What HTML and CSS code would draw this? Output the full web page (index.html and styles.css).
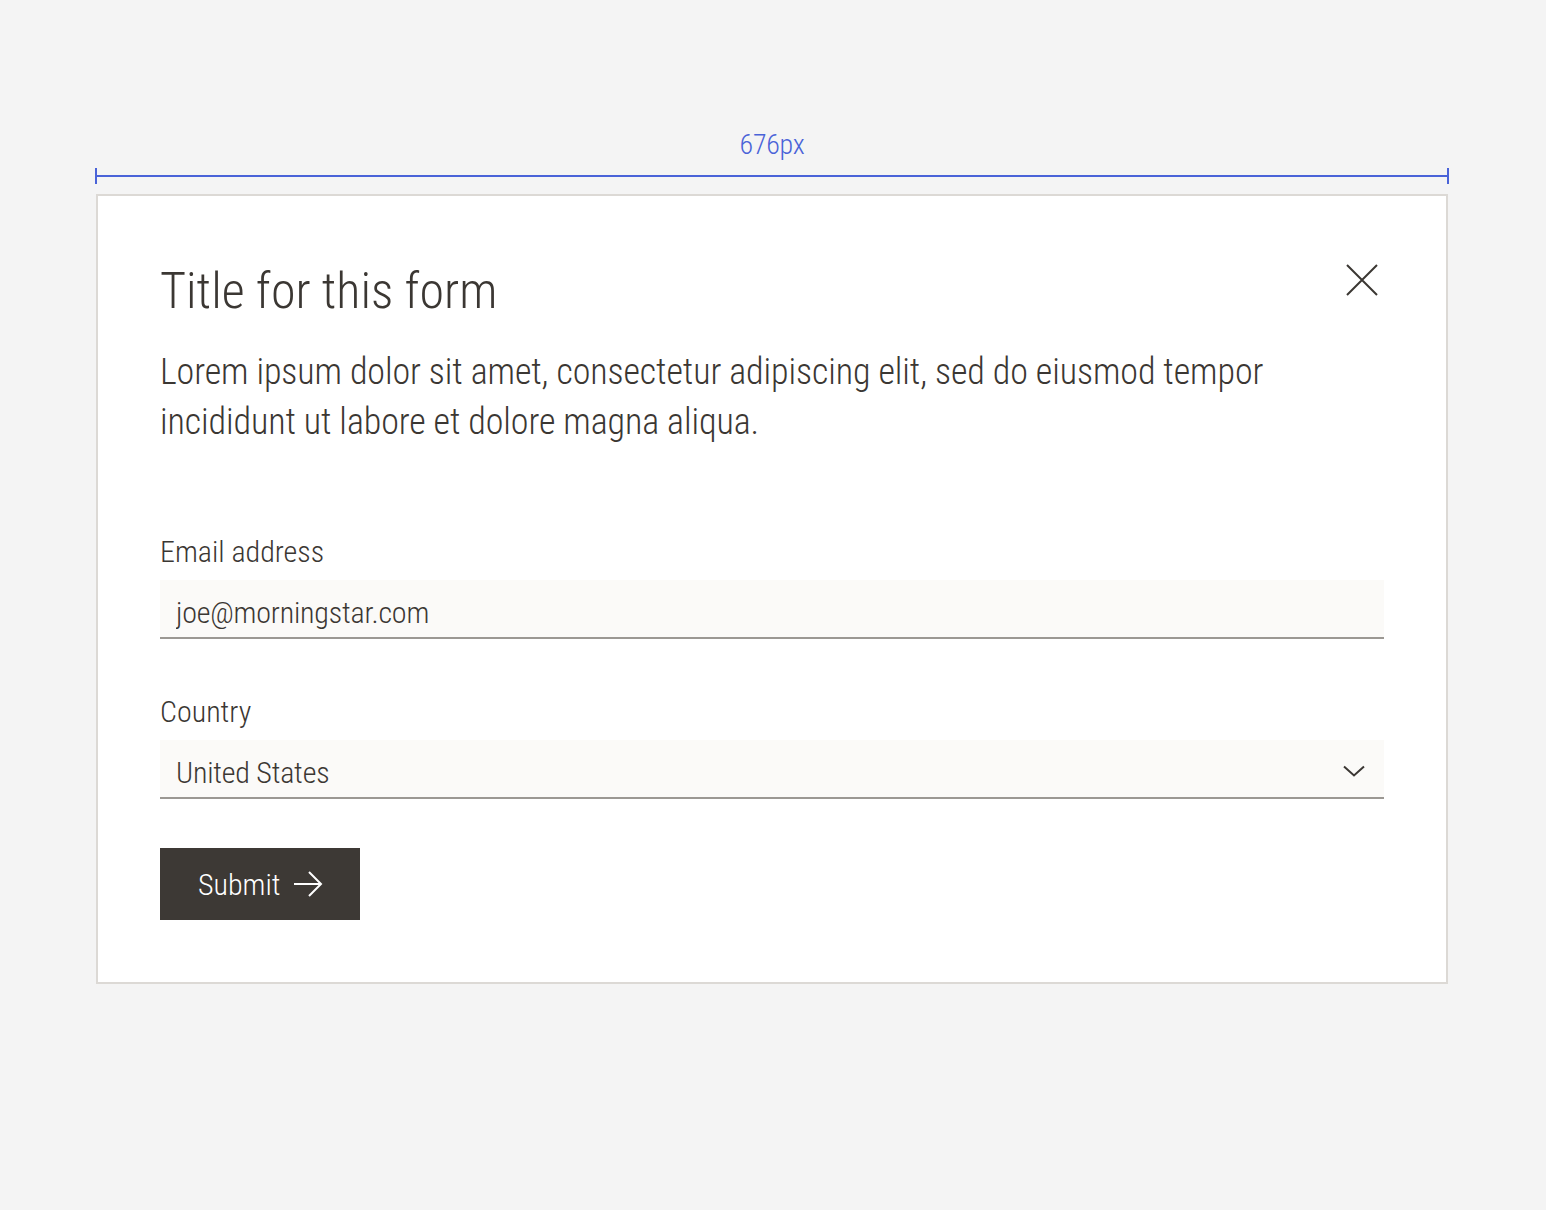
FILE: index.html
```html
<!DOCTYPE html>
<html lang="en">
<head>
<meta charset="utf-8">
<title>Form</title>
<link rel="stylesheet" href="styles.css">
</head>
<body>
<div class="stage">
  <div class="measure">
    <div class="measure-label">676px</div>
    <div class="ruler"><span class="tick"></span><span class="ruler-line"></span><span class="tick"></span></div>
  </div>
  <form class="card">
    <div class="card-head">
      <h1 class="title">Title for this form</h1>
      <button type="button" class="close" aria-label="Close">
        <svg width="32" height="32" viewBox="0 0 32 32"><path d="M1 1L31 31M31 1L1 31" stroke="#3b3733" stroke-width="2" fill="none"/></svg>
      </button>
    </div>
    <p class="intro">Lorem ipsum dolor sit amet, consectetur adipiscing elit, sed do eiusmod tempor incididunt ut labore et dolore magna aliqua.</p>
    <label class="field field-email">
      <span class="label">Email address</span>
      <input class="control" type="email" value="joe@morningstar.com">
    </label>
    <label class="field field-country">
      <span class="label">Country</span>
      <span class="select-wrap">
        <select class="control">
          <option>United States</option>
        </select>
        <svg class="chevron" width="22" height="12" viewBox="0 0 22 12"><path d="M1 1.5L11 10.5L21 1.5" stroke="#3b3733" stroke-width="2" fill="none"/></svg>
      </span>
    </label>
    <button type="button" class="submit">Submit
      <svg width="30" height="26" viewBox="0 0 30 26"><path d="M1 13H28M16 1L28 13L16 25" stroke="#ffffff" stroke-width="2" fill="none"/></svg>
    </button>
  </form>
</div>
</body>
</html>
```
FILE: styles.css
```css
* { box-sizing: border-box; }
html, body { margin: 0; padding: 0; }
body {
  background: #f4f4f4;
  font-family: "Roboto Condensed", Roboto, "Liberation Sans", sans-serif;
  font-weight: 300;
  color: #3b3733;
}
.stage {
  width: 1354px;
  margin-left: 95px;
  padding-top: 130px;
}
.measure-label {
  text-align: center;
  color: #4a63d8;
  font-size: 28px;
  line-height: 30px;
  letter-spacing: -0.3px;
}
.ruler {
  display: flex;
  align-items: center;
  height: 16px;
  margin-top: 8px;
}
.tick { width: 2px; height: 16px; background: #4a63d8; }
.ruler-line { flex: 1; height: 2px; background: #4a63d8; }
.card {
  display: flex;
  flex-direction: column;
  align-items: flex-start;
  margin: 10px 1px 0;
  width: 1352px;
  background: #ffffff;
  border: 2px solid #dcd9d5;
  padding: 62px;
}
.card-head {
  display: flex;
  justify-content: space-between;
  align-items: flex-start;
  width: 100%;
}
.title {
  margin: 0;
  font-size: 50px;
  line-height: 66px;
  font-weight: 300;
  letter-spacing: 0;
}
.close {
  width: 44px;
  height: 44px;
  padding: 0;
  border: 0;
  background: none;
  display: flex;
  align-items: center;
  justify-content: center;
  cursor: pointer;
}
.intro {
  margin: 23px 0 0;
  font-size: 36px;
  line-height: 50px;
  letter-spacing: -0.1px;
  max-width: 1160px;
}
.field {
  display: flex;
  flex-direction: column;
  width: 100%;
}
.field-email { margin-top: 85px; }
.field-country { margin-top: 53px; }
.label {
  font-size: 30px;
  line-height: 40px;
  letter-spacing: 0;
}
.control {
  display: block;
  width: 100%;
  margin-top: 8px;
  height: 59px;
  padding: 8px 16px 0;
  line-height: 49px;
  border: 0;
  border-bottom: 2px solid #9b9893;
  background: #fbfaf8;
  font-family: inherit;
  font-weight: 300;
  font-size: 30px;
  letter-spacing: -0.2px;
  color: #3b3733;
  outline: none;
  border-radius: 0;
  -webkit-appearance: none;
  appearance: none;
}
.select-wrap {
  position: relative;
  display: block;
  width: 100%;
}
.chevron {
  position: absolute;
  right: 19px;
  top: 33px;
  pointer-events: none;
}
.submit {
  margin-top: 49px;
  width: 200px;
  height: 72px;
  display: flex;
  align-items: center;
  gap: 12px;
  padding: 0 0 0 38px;
  border: 0;
  background: #3d3935;
  color: #ffffff;
  font-family: inherit;
  font-weight: 300;
  font-size: 30px;
  letter-spacing: 0;
  cursor: pointer;
}
```
